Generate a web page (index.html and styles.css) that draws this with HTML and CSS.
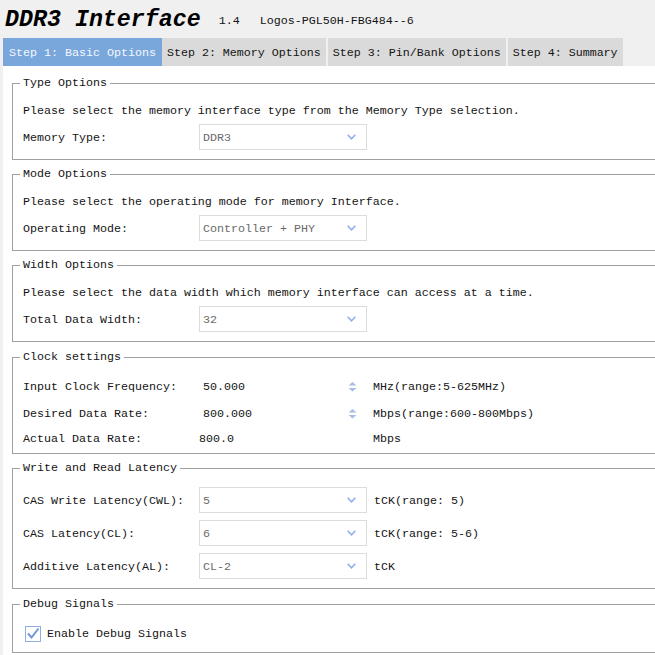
FILE: index.html
```html
<!DOCTYPE html>
<html>
<head>
<meta charset="utf-8">
<link rel="stylesheet" href="styles.css">
</head>
<body>
<header class="head">
  <h1 class="title">DDR3 Interface</h1>
  <span class="ver">1.4</span>
  <span class="dev">Logos-PGL50H-FBG484--6</span>
</header>
<nav class="tabs">
  <div class="tab active">Step 1: Basic Options</div>
  <div class="tab">Step 2: Memory Options</div>
  <div class="tab">Step 3: Pin/Bank Options</div>
  <div class="tab">Step 4: Summary</div>
</nav>
<main class="panel">
  <fieldset class="group">
    <legend>Type Options</legend>
    <p class="desc">Please select the memory interface type from the Memory Type selection.</p>
    <div class="row">
      <span class="label">Memory Type:</span>
      <div class="select"><span>DDR3</span><svg class="chev" width="9" height="6" viewBox="0 0 9 6"><path d="M0.7 0.7 L4.5 4.8 L8.3 0.7" fill="none" stroke="#8eacee" stroke-width="1.5"/></svg></div>
    </div>
  </fieldset>

  <fieldset class="group">
    <legend>Mode Options</legend>
    <p class="desc">Please select the operating mode for memory Interface.</p>
    <div class="row">
      <span class="label">Operating Mode:</span>
      <div class="select"><span>Controller + PHY</span><svg class="chev" width="9" height="6" viewBox="0 0 9 6"><path d="M0.7 0.7 L4.5 4.8 L8.3 0.7" fill="none" stroke="#8eacee" stroke-width="1.5"/></svg></div>
    </div>
  </fieldset>

  <fieldset class="group wide-gap">
    <legend>Width Options</legend>
    <p class="desc">Please select the data width which memory interface can access at a time.</p>
    <div class="row">
      <span class="label">Total Data Width:</span>
      <div class="select"><span>32</span><svg class="chev" width="9" height="6" viewBox="0 0 9 6"><path d="M0.7 0.7 L4.5 4.8 L8.3 0.7" fill="none" stroke="#8eacee" stroke-width="1.5"/></svg></div>
    </div>
  </fieldset>

  <fieldset class="group clock">
    <legend>Clock settings</legend>
    <div class="crow">
      <span class="label">Input Clock Frequency:</span>
      <div class="spin"><span>50.000</span><svg class="arrows" width="9" height="10" viewBox="0 0 9 10"><path d="M0.5 3.5 L4.5 0 L8.5 3.5 Z M0.5 6 L4.5 9.5 L8.5 6 Z" fill="#a5bde4"/></svg></div>
      <span class="unit">MHz(range:5-625MHz)</span>
    </div>
    <div class="crow">
      <span class="label">Desired Data Rate:</span>
      <div class="spin"><span>800.000</span><svg class="arrows" width="9" height="10" viewBox="0 0 9 10"><path d="M0.5 3.5 L4.5 0 L8.5 3.5 Z M0.5 6 L4.5 9.5 L8.5 6 Z" fill="#a5bde4"/></svg></div>
      <span class="unit">Mbps(range:600-800Mbps)</span>
    </div>
    <div class="crow last">
      <span class="label">Actual Data Rate:</span>
      <span class="plain">800.0</span>
      <span class="unit">Mbps</span>
    </div>
  </fieldset>

  <fieldset class="group lat wide-gap">
    <legend>Write and Read Latency</legend>
    <div class="row">
      <span class="label">CAS Write Latency(CWL):</span>
      <div class="select"><span>5</span><svg class="chev" width="9" height="6" viewBox="0 0 9 6"><path d="M0.7 0.7 L4.5 4.8 L8.3 0.7" fill="none" stroke="#8eacee" stroke-width="1.5"/></svg></div>
      <span class="unit">tCK(range: 5)</span>
    </div>
    <div class="row">
      <span class="label">CAS Latency(CL):</span>
      <div class="select"><span>6</span><svg class="chev" width="9" height="6" viewBox="0 0 9 6"><path d="M0.7 0.7 L4.5 4.8 L8.3 0.7" fill="none" stroke="#8eacee" stroke-width="1.5"/></svg></div>
      <span class="unit">tCK(range: 5-6)</span>
    </div>
    <div class="row">
      <span class="label">Additive Latency(AL):</span>
      <div class="select"><span>CL-2</span><svg class="chev" width="9" height="6" viewBox="0 0 9 6"><path d="M0.7 0.7 L4.5 4.8 L8.3 0.7" fill="none" stroke="#8eacee" stroke-width="1.5"/></svg></div>
      <span class="unit">tCK</span>
    </div>
  </fieldset>

  <fieldset class="group debug">
    <legend>Debug Signals</legend>
    <div class="check">
      <svg class="box" width="16" height="16" viewBox="0 0 16 16"><rect x="0.5" y="0.5" width="15" height="15" fill="#fff" stroke="#8eaee6"/><path d="M3 7.5 L6.5 11.5 L13.5 2.5" fill="none" stroke="#6f97dc" stroke-width="2"/></svg>
      <span>Enable Debug Signals</span>
    </div>
  </fieldset>
</main>
</body>
</html>
```

FILE: styles.css
```css
html, body {
  margin: 0;
  padding: 0;
}
body {
  width: 655px;
  height: 655px;
  overflow: hidden;
  background: #f0f0f0;
  font-family: "Liberation Mono", "Courier New", monospace;
  font-size: 11.67px;
  color: #141414;
}
.head {
  display: flex;
  align-items: center;
  height: 35px;
  padding: 3px 0 0 5px;
}
.title {
  margin: 0;
  font-size: 23.3px;
  font-weight: bold;
  font-style: italic;
  line-height: 35px;
  color: #000;
}
.ver {
  margin-left: 18px;
  line-height: 14px;
}
.dev {
  margin-left: 20px;
  line-height: 14px;
}
.tabs {
  display: flex;
  height: 28px;
  padding-left: 3px;
}
.tab {
  line-height: 26px;
  padding: 2px 5px 0;
  background: #dadada;
  margin-right: 2px;
  white-space: nowrap;
}
.tab.active {
  background: #79a7dc;
  color: #f4f8fc;
  padding: 2px 6px 0;
  margin-right: 0;
}
.panel {
  display: block;
  background: #fff;
  margin-left: 3px;
  height: 589px;
  padding: 10px 0 0 9px;
  box-sizing: border-box;
}
.group {
  margin: 0 -30px 7px 0;
  border: 1px solid #a0a0a0;
  padding: 13px 0 9px 10px;
  min-width: 0;
}
.group.wide-gap {
  margin-bottom: 8px;
}
.group legend {
  padding: 0 3px;
  margin-left: -3px;
  line-height: 14px;
}
.desc {
  margin: 0;
  line-height: 14px;
  padding-top: 1px;
  margin-bottom: -1px;
}
.row {
  display: grid;
  grid-template-columns: 176px 168px auto;
  align-items: center;
  margin-top: 7px;
}
.label {
  line-height: 14px;
  padding-top: 1px;
}
.select {
  height: 26px;
  box-sizing: border-box;
  border: 1px solid #dcdcdc;
  display: flex;
  align-items: center;
  justify-content: space-between;
  padding: 1px 10px 0 3px;
  color: #6a6a6a;
}
.chev {
  display: block;
  margin-top: -1px;
}
.row .unit {
  margin-left: 7px;
}
.clock {
  padding-top: 9px;
  padding-bottom: 4px;
}
.crow {
  display: grid;
  grid-template-columns: 176px 168px auto;
  align-items: center;
  height: 27px;
}
.crow .unit {
  margin-left: 6px;
}
.crow.last {
  height: 22px;
}
.spin {
  display: flex;
  align-items: center;
  justify-content: space-between;
  padding: 0 10px 0 4px;
}
.spin span {
  padding-top: 1px;
}
.arrows {
  display: block;
}
.plain {
  line-height: 14px;
  padding-top: 1px;
}
.unit {
  line-height: 14px;
  padding-top: 1px;
}
.lat {
  padding-top: 12px;
}
.lat .row:first-of-type {
  margin-top: 0;
}
.debug {
  padding-top: 15px;
  padding-bottom: 10px;
}
.check {
  display: flex;
  align-items: center;
  gap: 6px;
  margin-left: 2px;
  height: 16px;
}
.box {
  display: block;
}
```
